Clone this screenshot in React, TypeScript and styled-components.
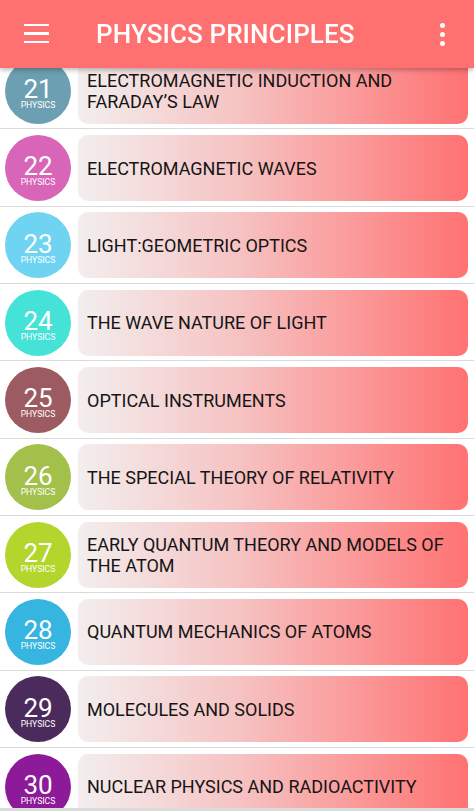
import React from "react";
import styled, { createGlobalStyle } from "styled-components";

interface Chapter {
  num: number;
  title: string;
  color: string;
}

const chapters: Chapter[] = [
  { num: 21, title: "ELECTROMAGNETIC INDUCTION AND FARADAY’S LAW", color: "#6c9fb1" },
  { num: 22, title: "ELECTROMAGNETIC WAVES", color: "#d965b8" },
  { num: 23, title: "LIGHT:GEOMETRIC OPTICS", color: "#6fd4f1" },
  { num: 24, title: "THE WAVE NATURE OF LIGHT", color: "#45e2d8" },
  { num: 25, title: "OPTICAL INSTRUMENTS", color: "#9b5b60" },
  { num: 26, title: "THE SPECIAL THEORY OF RELATIVITY", color: "#a2c04a" },
  { num: 27, title: "EARLY QUANTUM THEORY AND MODELS OF THE ATOM", color: "#b3d52c" },
  { num: 28, title: "QUANTUM MECHANICS OF ATOMS", color: "#36b5e0" },
  { num: 29, title: "MOLECULES AND SOLIDS", color: "#4a2b5c" },
  { num: 30, title: "NUCLEAR PHYSICS AND RADIOACTIVITY", color: "#8d1a99" }
];

function App() {
  return (
    <>
      <GlobalStyle />
      <AppBar>
        <MenuButton aria-label="menu">
          <span />
          <span />
          <span />
        </MenuButton>
        <Title>PHYSICS PRINCIPLES</Title>
        <MoreButton aria-label="more">
          <i />
          <i />
          <i />
        </MoreButton>
      </AppBar>
      <List>
        {chapters.map((c) => (
          <Row key={c.num}>
            <Badge $color={c.color}>
              <BadgeNum>{c.num}</BadgeNum>
              <BadgeLabel>PHYSICS</BadgeLabel>
            </Badge>
            <Card>
              <CardText>{c.title}</CardText>
            </Card>
          </Row>
        ))}
      </List>
      <BottomEdge />
    </>
  );
}

export default App;

const GlobalStyle = createGlobalStyle`
  html, body {
    margin: 0;
    padding: 0;
    background: #ffffff;
    font-family: Roboto, "Noto Sans", "Liberation Sans", sans-serif;
    overflow: hidden;
  }
  * {
    box-sizing: border-box;
  }
`;

const AppBar = styled.header`
  position: fixed;
  top: 0;
  left: 0;
  right: 0;
  z-index: 10;
  height: 68px;
  display: flex;
  align-items: center;
  padding: 0 0 0 24px;
  background: #ff7171;
  box-shadow: 0 2px 5px rgba(0, 0, 0, 0.28);
`;

const MenuButton = styled.div`
  width: 25px;
  display: flex;
  flex-direction: column;
  gap: 6px;
  margin-top: -1px;

  span {
    display: block;
    height: 2.5px;
    background: #ffffff;
  }
`;

const Title = styled.h1`
  flex: 1;
  margin: 0 0 0 47px;
  color: #ffffff;
  font-size: 26px;
  font-weight: 500;
  letter-spacing: 0.1px;
`;

const MoreButton = styled.div`
  width: 64px;
  display: flex;
  flex-direction: column;
  align-items: center;
  gap: 4px;

  i {
    display: block;
    width: 5px;
    height: 5px;
    border-radius: 50%;
    background: #ffffff;
  }
`;

const List = styled.main`
  padding-top: 52.2px;
`;

const Row = styled.div`
  height: 77.3px;
  display: flex;
  align-items: center;
  gap: 7px;
  padding: 1px 6px 0 5px;
  border-bottom: 1.5px solid #dadada;
`;

const Badge = styled.div<{ $color: string }>`
  flex: 0 0 66px;
  height: 66px;
  border-radius: 50%;
  background: ${(p) => p.$color};
  color: #ffffff;
  display: flex;
  flex-direction: column;
  align-items: center;
  justify-content: center;
  padding-top: 4.6px;
`;

const BadgeNum = styled.div`
  font-size: 26px;
  font-weight: 400;
  line-height: 24px;
`;

const BadgeLabel = styled.div`
  font-size: 8.6px;
  line-height: 8px;
`;

const Card = styled.div`
  flex: 1;
  height: 66px;
  border-radius: 10px;
  background: linear-gradient(to right, #f3eeee 0%, #f6c4c4 40%, #ff7272 100%);
  display: flex;
  align-items: center;
  padding: 0 12px 0 9px;
`;

const CardText = styled.div`
  font-size: 18px;
  line-height: 21px;
  color: #151515;
`;

const BottomEdge = styled.div`
  position: fixed;
  left: 0;
  right: 0;
  bottom: 0;
  height: 3px;
  background: #dcdcdc;
`;
